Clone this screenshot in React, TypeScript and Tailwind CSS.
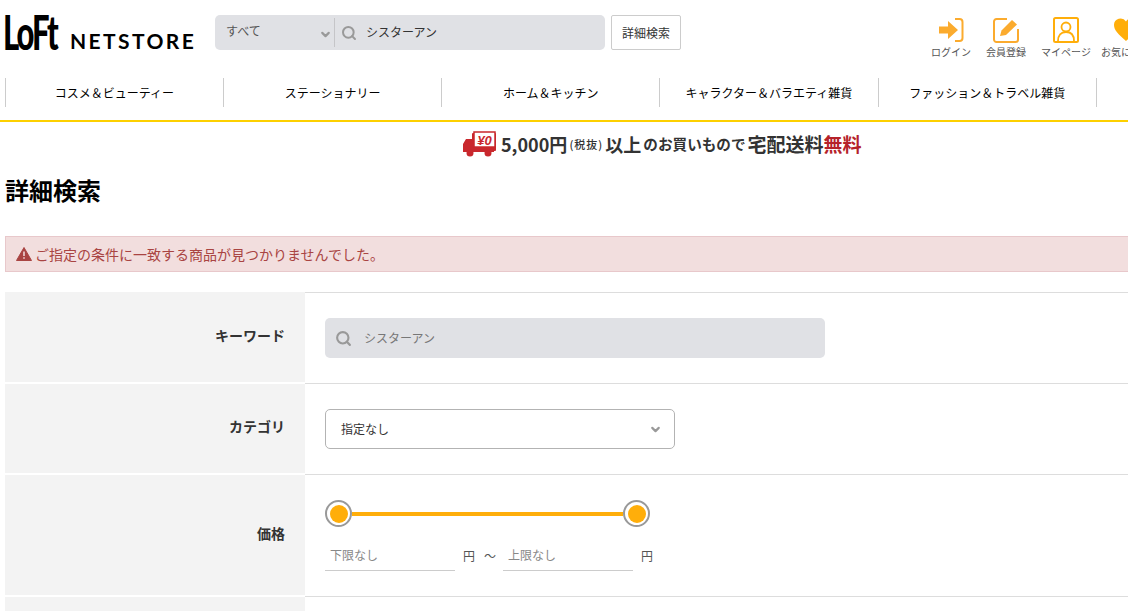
import { Search, ChevronDown } from 'lucide-react';

const navItems = ['コスメ＆ビューティー', 'ステーショナリー', 'ホーム＆キッチン', 'キャラクター＆バラエティ雑貨', 'ファッション＆トラベル雑貨'];

const LoginIcon = () => (
  <svg width="26" height="26" viewBox="0 0 26 26" fill="none">
    <path d="M1 9.5h9V4l10 9-10 9v-5.5H1z" fill="#fbab2e" />
    <path d="M17 2h4.5a3 3 0 0 1 3 3v16a3 3 0 0 1-3 3H17" stroke="#fbab2e" strokeWidth="2" />
  </svg>
);

const EntryIcon = () => (
  <svg width="26" height="26" viewBox="0 0 26 26" fill="none">
    <path d="M14 2H3.500A2.500 2.500 0 0 0 1 4.500v18A2.500 2.500 0 0 0 3.500 25h19a2.500 2.500 0 0 0 2.500-2.500V12" stroke="#fbab2e" strokeWidth="2" />
    <path d="M7 19l1.500-5.500L19 3l5 4.500L13 18z" fill="#fbab2e" />
  </svg>
);

const MyPageIcon = () => (
  <svg width="26" height="26" viewBox="0 0 26 26" fill="none">
    <rect x="1" y="1" width="24" height="24" rx="1.500" stroke="#ffae0a" strokeWidth="2" />
    <circle cx="13" cy="10" r="4.500" stroke="#ffae0a" strokeWidth="1.800" />
    <path d="M5 24c0-6 3-9 8-9s8 3 8 9" stroke="#ffae0a" strokeWidth="1.800" />
  </svg>
);

const HeartIcon = () => (
  <svg width="26" height="26" viewBox="0 0 26 26" className="shrink-0">
    <path d="M13 24C5 17 1 13 1 8a6.500 6.500 0 0 1 12-3.500A6.500 6.500 0 0 1 25 8c0 5-4 9-12 16z" fill="#ffae0a" />
  </svg>
);

const Truck = () => (
  <svg width="33" height="26" viewBox="0 0 33 26" className="shrink-0">
    <path d="M0 13l3-5h6v13H0z" fill="#c9282d" />
    <rect x="9" y="2" width="24" height="18" rx="1" fill="#c9282d" />
    <rect x="11" y="1" width="21" height="15" fill="#fff" stroke="#c9282d" strokeWidth="1.500" />
    <rect x="0" y="18" width="31" height="3" fill="#c9282d" />
    <circle cx="7" cy="22" r="3.500" fill="#c9282d" />
    <circle cx="25" cy="22" r="3.500" fill="#c9282d" />
    <text x="21.500" y="13.500" fontSize="13" fontWeight="700" fontStyle="italic" textAnchor="middle" fill="#c9282d" fontFamily="Liberation Sans">¥0</text>
  </svg>
);

const AlertIcon = () => (
  <svg width="16" height="14" viewBox="0 0 16 14" className="shrink-0 mr-[3px]">
    <path d="M8 0.500L15.500 13.500H0.500z" fill="#a94442" stroke="#a94442" strokeLinejoin="round" />
    <path d="M8 4.500v4.500M8 10.200v1.500" stroke="#f2dede" strokeWidth="1.500" />
  </svg>
);

const HeaderLink = ({ label, width, children }: { label: string; width: string; children: React.ReactNode }) => (
  <div className={`flex flex-col items-center shrink-0 ${width}`}>
    {children}
    <span className="mt-[2px] text-[10px] leading-[14px] text-[#555] whitespace-nowrap">{label}</span>
  </div>
);

const Thumb = () => (
  <div className="w-[27px] h-[27px] rounded-full border-2 border-[#999] bg-white flex items-center justify-center shrink-0">
    <div className="w-[18px] h-[18px] rounded-full bg-[#ffae0a]" />
  </div>
);

const Row = ({ label, height, first, children }: { label?: string; height: string; first?: boolean; children?: React.ReactNode }) => (
  <div className="flex">
    <div className={`w-[300px] shrink-0 mb-[2px] bg-[#f3f3f3] flex items-center justify-end pr-5 pb-[5px] text-sm font-bold text-[#333] ${height}`}>
      {label}
    </div>
    <div className={`flex-1 border-b border-[#ddd] pl-5 min-w-0 ${first ? 'border-t' : ''}`}>{children}</div>
  </div>
);

const App = () => {
  return (
    <div className="relative w-[1128px] h-[611px] overflow-hidden bg-white text-black font-['Noto_Sans_CJK_JP',sans-serif]">
      <header className="flex pl-[5px] pt-[15px] h-[63px]">
        <div className="w-[210px] h-[35px] flex items-end shrink-0 font-['Lato',sans-serif] text-black whitespace-nowrap">
          <div className="w-[65px] h-[35px] shrink-0 -ml-[2px] mr-[2px]">
            <span className="block origin-left scale-x-[0.66] text-[47px] leading-[35px] font-black tracking-[-3px]">LoFt</span>
          </div>
          <span className="text-[21px] leading-[21px] font-bold tracking-[2.400px] -mb-[1px]">NETSTORE</span>
        </div>
        <div className="w-[390px] h-[35px] bg-[#e0e1e5] rounded-[5px] flex items-center shrink-0">
          <span className="w-[104px] pl-[11px] mb-1 text-xs text-[#555]">すべて</span>
          <ChevronDown size={13} strokeWidth={4} className="text-[#999] mr-[2px] mt-[3px] shrink-0" />
          <div className="w-px h-[29px] bg-[#c5c5c8] shrink-0" />
          <Search size={16} strokeWidth={3} className="text-[#999] ml-[6px] shrink-0" />
          <span className="ml-[9px] mb-px text-xs text-[#333]">シスターアン</span>
        </div>
        <button className="ml-[6px] w-[70px] h-[35px] border border-[#ccc] rounded-[2px] bg-white text-xs text-[#333] shrink-0">詳細検索</button>
        <div className="flex gap-[15px] ml-[250px] pt-[2px]">
          <HeaderLink label="ログイン" width="w-[40px]"><LoginIcon /></HeaderLink>
          <HeaderLink label="会員登録" width="w-[40px]"><EntryIcon /></HeaderLink>
          <HeaderLink label="マイページ" width="w-[50px]"><MyPageIcon /></HeaderLink>
          <HeaderLink label="お気に入り" width="w-[50px] -ml-[5px]"><HeartIcon /></HeaderLink>
        </div>
      </header>

      <nav className="flex h-[59px] pl-[4.800px] pt-[15px] border-b-2 border-[#fdd000]">
        {navItems.map((item) => (
          <div key={item} className="w-[218.200px] h-[29px] border-l border-[#ccc] flex items-center justify-center text-xs text-black whitespace-nowrap">
            {item}
          </div>
        ))}
        <div className="h-[29px] border-l border-[#ccc]" />
      </nav>

      <div className="flex items-center h-[44px] pl-[463px] text-[#333] font-bold whitespace-nowrap">
        <Truck />
        <span className="ml-[5px] text-lg">5,000円</span>
        <span className="w-[38px] text-center text-[11px] tracking-[1px] font-medium">(税抜)</span>
        <span className="text-lg">以上</span>
        <span className="ml-[2px] text-[14.600px]">のお買いもので</span>
        <span className="ml-[2px] text-[19px]">宅配送料</span>
        <span className="text-[19px] text-[#b5222a]">無料</span>
      </div>

      <h1 className="pl-[5px] mt-[8px] text-2xl leading-[32px] font-bold text-black">詳細検索</h1>

      <div className="ml-[5px] -mr-[4px] mt-[30px] h-[36px] bg-[#f2dede] border border-[#e8c8cb] flex items-center pl-[10px] text-sm text-[#a94442]">
        <AlertIcon />
        ご指定の条件に一致する商品が見つかりませんでした。
      </div>

      <div className="ml-[5px] mt-[20px] flex flex-col">
        <Row label="キーワード" height="h-[90px]" first>
          <div className="w-[500px] h-[40px] mt-[25px] bg-[#e0e1e5] rounded-[5px] flex items-center pl-[10px]">
            <Search size={17} strokeWidth={3} className="text-[#999]" />
            <span className="ml-[12px] mb-px text-xs text-[#777]">シスターアン</span>
          </div>
        </Row>
        <Row label="カテゴリ" height="h-[89px]">
          <div className="w-[350px] h-[40px] mt-[25px] border border-[#b3b3b3] rounded-[5px] flex items-center justify-between pl-[15px] pr-[12px] text-xs text-[#333]">
            <span className="mb-px">指定なし</span>
            <ChevronDown size={13} strokeWidth={4} className="text-[#999]" />
          </div>
        </Row>
        <Row label="価格" height="h-[120px]">
          <div className="w-[325px] mt-[25px] flex items-center">
            <Thumb />
            <div className="flex-1 h-1 bg-[#ffae0a]" />
            <Thumb />
          </div>
          <div className="flex items-end mt-[12px] text-xs text-[#555]">
            <div className="w-[130px] h-[32px] border-b border-[#ccc] pl-[5px] pt-[8px] text-[#888]">下限なし</div>
            <span className="ml-[8px] mb-[7px]">円</span>
            <span className="ml-[9px] mb-[7px]">～</span>
            <div className="ml-[7px] w-[130px] h-[32px] border-b border-[#ccc] pl-[5px] pt-[8px] text-[#888]">上限なし</div>
            <span className="ml-[8px] mb-[7px]">円</span>
          </div>
        </Row>
        <Row height="h-[40px]" />
      </div>
    </div>
  );
};

export default App;
